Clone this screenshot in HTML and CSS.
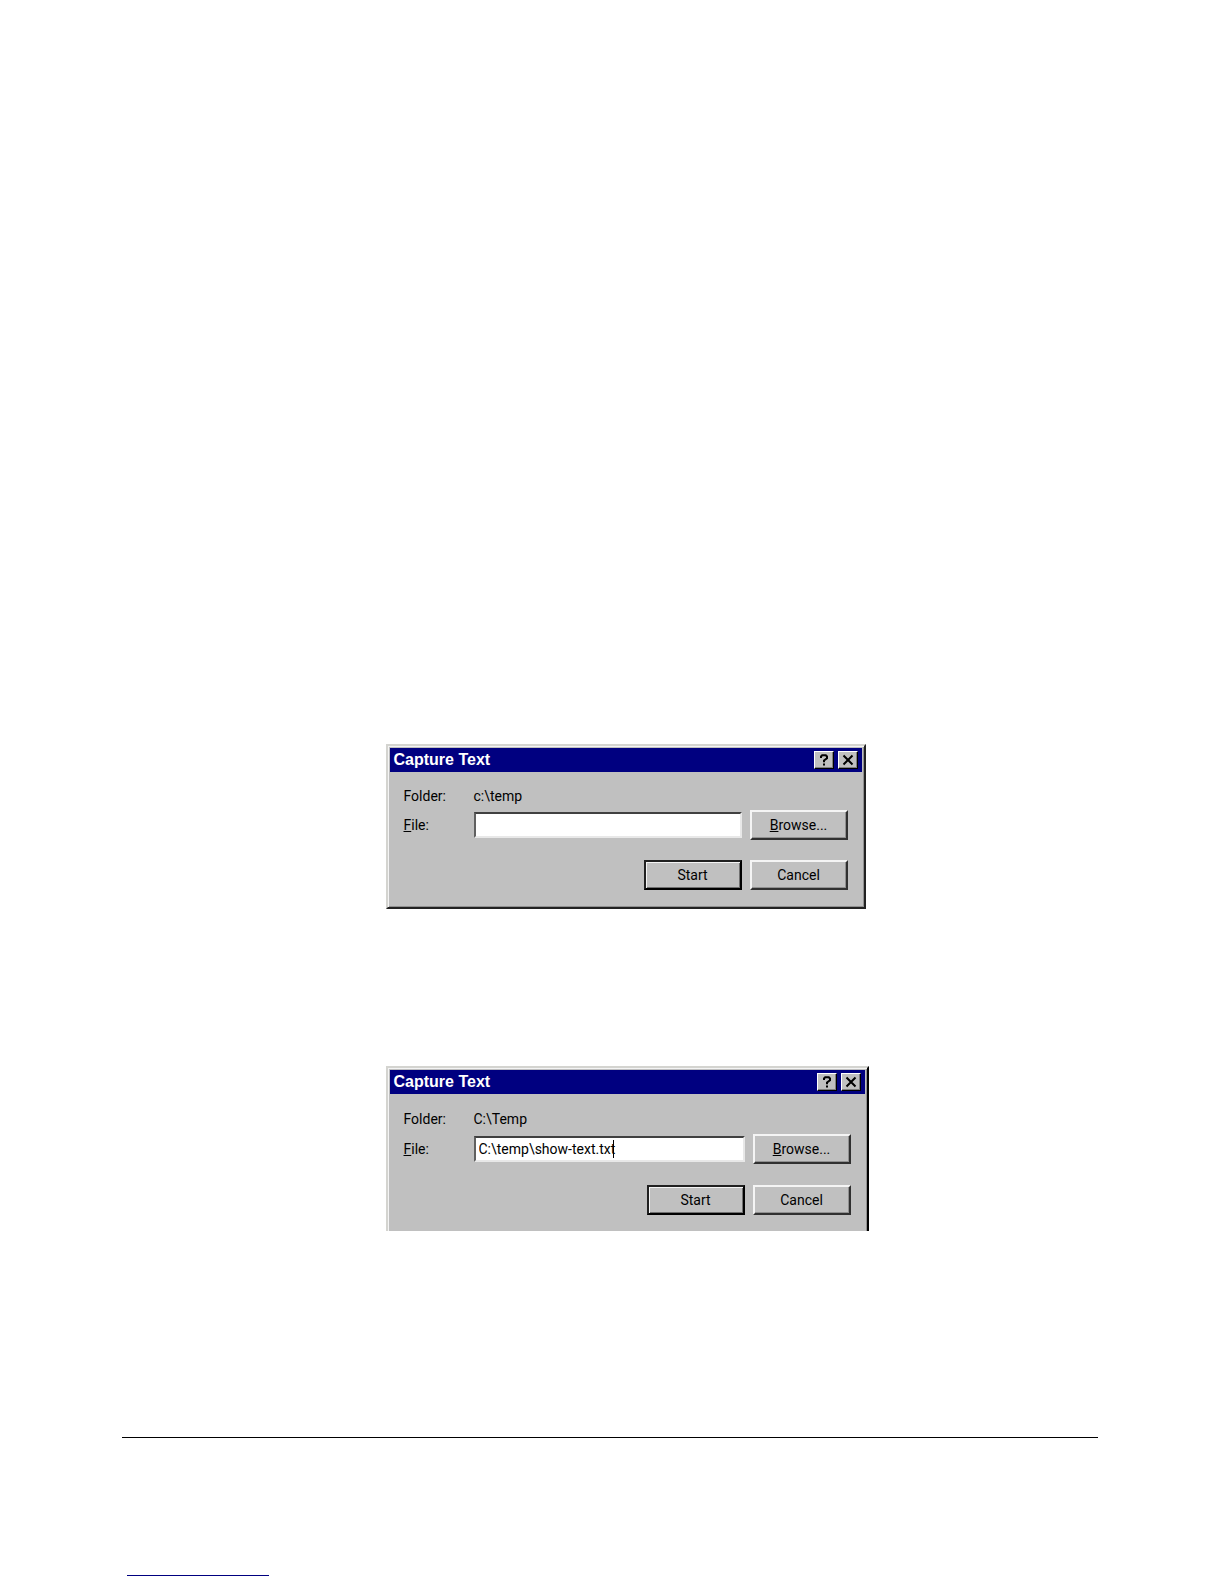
FILE: index.html
```html
<!DOCTYPE html>
<html lang="en">
  <head>
    <meta charset="UTF-8" />
    <meta name="viewport" content="width=device-width, initial-scale=1.0" />
    <title>Capture Text</title>
    <link rel="stylesheet" href="styles.css">
  </head>
  <body>
    <main class="content">
      <div class="figures">
        <form class="dialog">
          <div class="titlebar">
            <h2>Capture Text</h2>
            <button type="button" class="title-btn" aria-label="Help">
              <svg width="12" height="14" viewBox="0 0 12 14"><path d="M3 5V3.5L4.2 2.2H7.8L9 3.5V5.2L6 7.5V9.2M6 10.5V12.5" /></svg>
            </button>
            <button type="button" class="title-btn" aria-label="Close">
              <svg width="12" height="14" viewBox="0 0 12 14"><path d="M1.5 2.5L10.5 11.5M10.5 2.5L1.5 11.5" /></svg>
            </button>
          </div>
          <div class="fields">
            <span>Folder:</span>
            <span class="folder">c:\temp</span>
            <label for="file1"><u>F</u>ile:</label>
            <div class="file-box">
              <input type="text" id="file1" />
            </div>
            <button type="button" class="btn"><u>B</u>rowse...</button>
          </div>
          <div class="actions">
            <button type="submit" class="btn default">Start</button>
            <button type="button" class="btn">Cancel</button>
          </div>
        </form>

        <form class="dialog cropped">
          <div class="titlebar">
            <h2>Capture Text</h2>
            <button type="button" class="title-btn" aria-label="Help">
              <svg width="12" height="14" viewBox="0 0 12 14"><path d="M3 5V3.5L4.2 2.2H7.8L9 3.5V5.2L6 7.5V9.2M6 10.5V12.5" /></svg>
            </button>
            <button type="button" class="title-btn" aria-label="Close">
              <svg width="12" height="14" viewBox="0 0 12 14"><path d="M1.5 2.5L10.5 11.5M10.5 2.5L1.5 11.5" /></svg>
            </button>
          </div>
          <div class="fields">
            <span>Folder:</span>
            <span class="folder">C:\Temp</span>
            <label for="file2"><u>F</u>ile:</label>
            <div class="file-box">
              <input type="text" id="file2" value="C:\temp\show-text.txt" />
              <span class="caret"></span>
            </div>
            <button type="button" class="btn"><u>B</u>rowse...</button>
          </div>
          <div class="actions">
            <button type="submit" class="btn default">Start</button>
            <button type="button" class="btn">Cancel</button>
          </div>
        </form>
      </div>
    </main>
    <footer class="footer">
      <a href="#" class="footer-link" aria-label="Home"></a>
    </footer>
  </body>
</html>
```

FILE: styles.css
```css
* {
  box-sizing: border-box;
}

body {
  margin: 0;
  padding: 0 126px 8px 122px;
  background: #fff;
  color: #000;
  font-family: Roboto, "Liberation Sans", Arial, sans-serif;
  font-size: 14px;
  line-height: 20px;
}

.content {
  padding: 744px 0 206px 34px;
}

.figures {
  display: flex;
  flex-direction: column;
  gap: 157px;
  max-width: 483px;
  margin: 0 auto;
}

.dialog {
  width: 100%;
  max-width: 480px;
  padding: 2px;
  background: #c0c0c0;
  border: 2px solid;
  border-color: #d4d4d0 #222 #222 #d4d4d0;
  box-shadow: inset 1px 1px #f4f4f4, inset -1px -1px #909090;
}

.titlebar {
  display: flex;
  align-items: center;
  gap: 4px;
  height: 24px;
  padding: 0 4px;
  background: #000080;
  color: #fff;
}

.titlebar h2 {
  flex: 1;
  margin: 0;
  font-family: "Liberation Sans", Arial, sans-serif;
  font-size: 16px;
  font-weight: bold;
}

.title-btn {
  display: flex;
  align-items: center;
  justify-content: center;
  width: 20px;
  height: 18px;
  padding: 0;
  background: #c0c0c0;
  border: 1px solid;
  border-color: #fff #000 #000 #fff;
  box-shadow: inset -1px -1px #808080;
}

.title-btn svg {
  fill: none;
  stroke: #000;
  stroke-width: 2;
}

.fields {
  display: grid;
  grid-template-columns: 62px 1fr 98px;
  gap: 4px 8px;
  align-items: center;
  padding: 14px 14px 0;
}

.folder {
  grid-column: span 2;
}

.file-box {
  position: relative;
}

.file-box input {
  display: block;
  width: 100%;
  height: 26px;
  padding: 0 3px;
  background: #fff;
  border: 2px solid;
  border-color: #404040 #e8e8e8 #e8e8e8 #606060;
  border-radius: 0;
  color: #000;
  font: inherit;
  outline: none;
}

.caret {
  position: absolute;
  top: 4px;
  left: 139px;
  width: 1px;
  height: 18px;
  background: #000;
}

.btn {
  width: 98px;
  height: 30px;
  padding: 0;
  background: #c0c0c0;
  border: 2px solid;
  border-color: #f4f4f4 #303030 #303030 #f4f4f4;
  box-shadow: inset -1px -1px #909090;
  color: #000;
  font: inherit;
}

.btn.default {
  border-color: #202020 #000 #000 #202020;
  box-shadow: inset 1px 1px #f4f4f4, inset -1px -1px #707070;
}

.actions {
  display: flex;
  justify-content: flex-end;
  gap: 8px;
  padding: 20px 14px 15px;
}

/* second window runs past its bottom edge */
.cropped {
  max-width: 483px;
  padding-bottom: 0;
  border-right-color: #000;
  border-bottom: none;
  box-shadow: inset 1px 1px #f4f4f4, inset -1px 0 #909090;
}

.cropped .fields {
  row-gap: 5px;
  padding-top: 15px;
}

.cropped .actions {
  padding-top: 21px;
  padding-bottom: 16px;
}

.footer {
  border-top: 1px solid #000;
}

.footer-link {
  display: block;
  width: 142px;
  height: 138px;
  margin-left: 5px;
  border-bottom: 1px solid #000080;
}
```
